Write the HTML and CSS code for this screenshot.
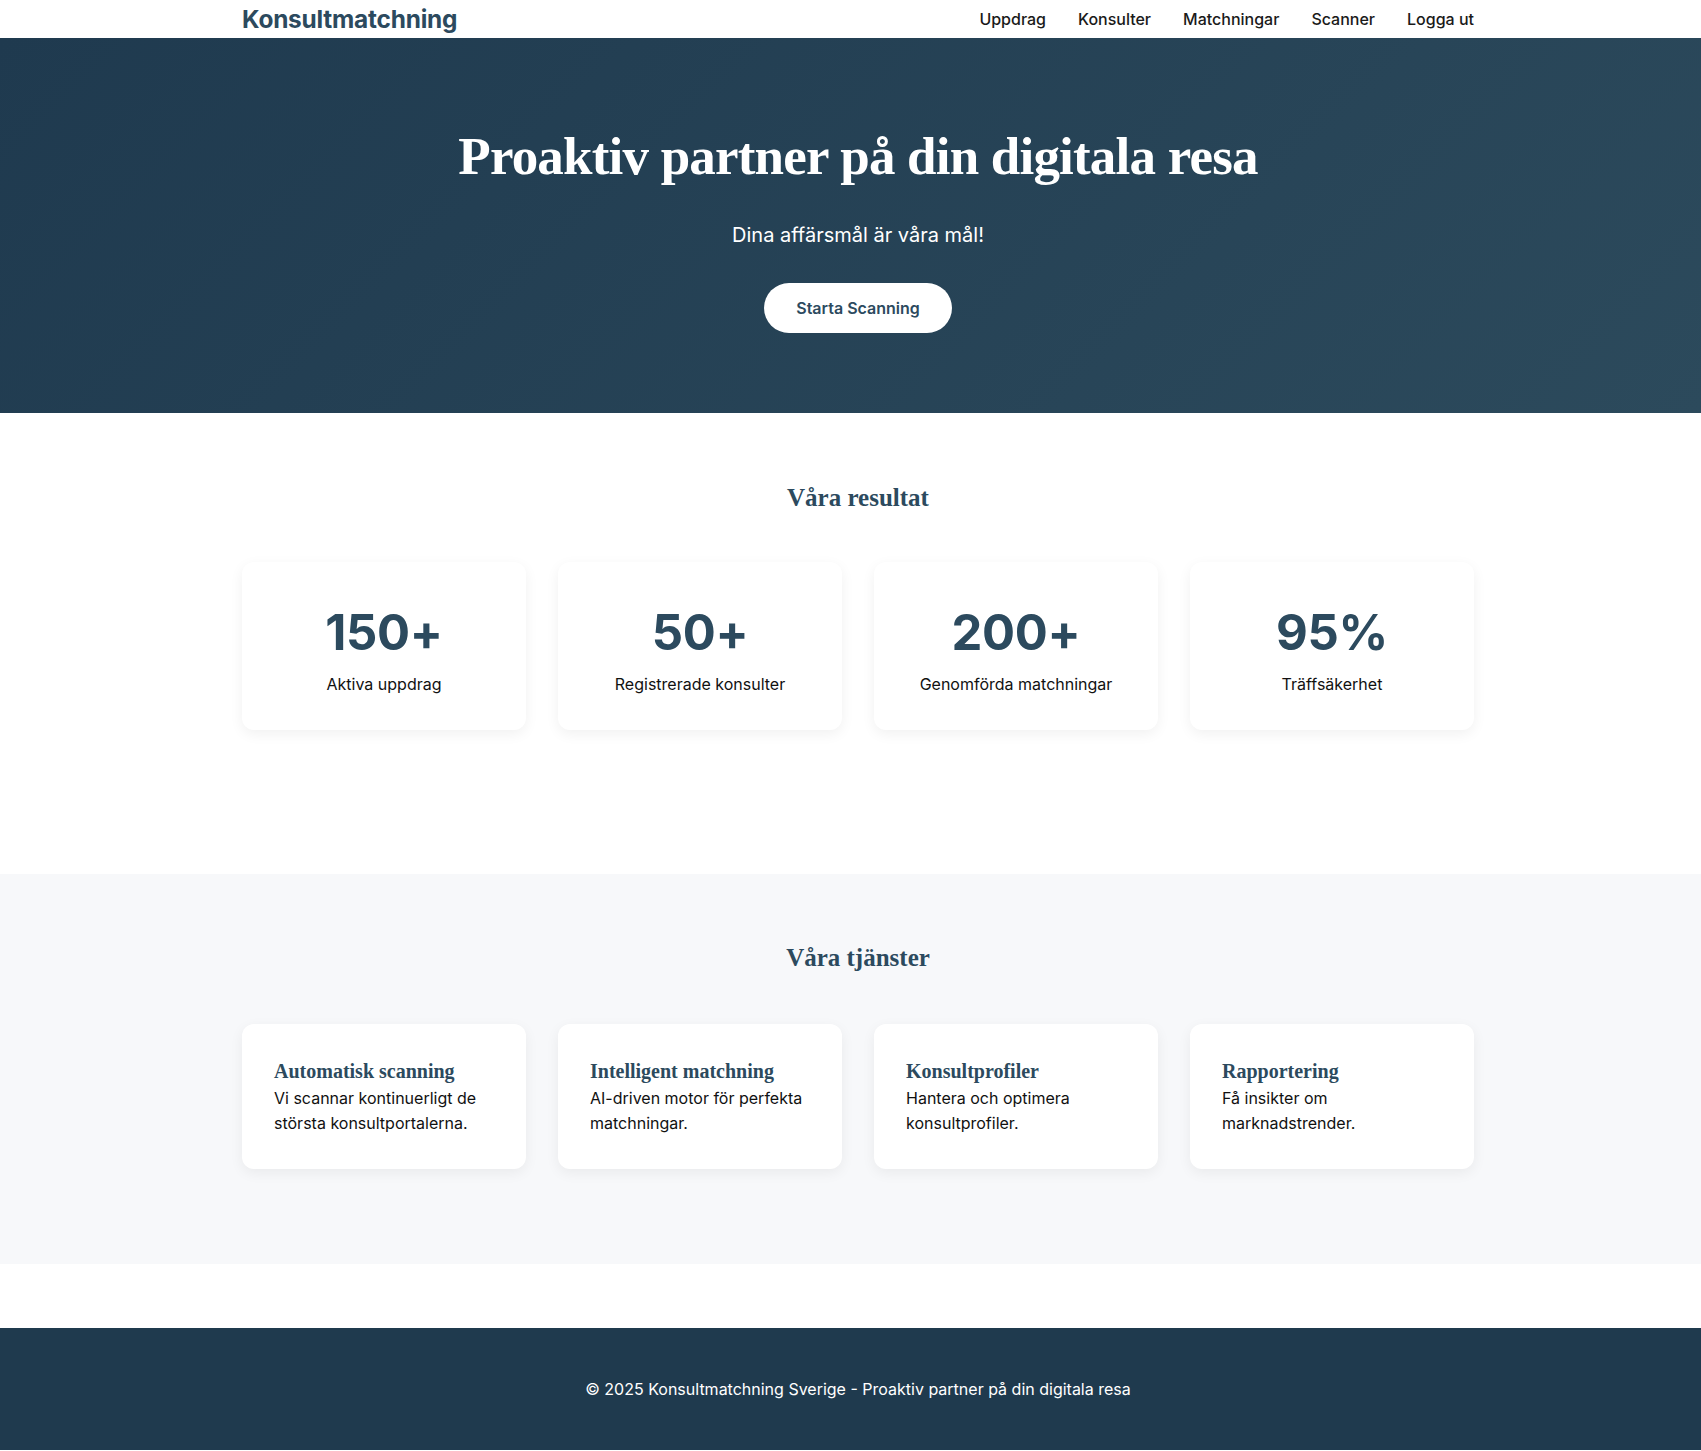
FILE: index.html
```html
<!DOCTYPE html>
<html lang="sv">
<head>
<meta charset="utf-8">
<title>Konsultmatchning</title>
<link rel="stylesheet" href="styles.css">
</head>
<body>
<header class="site-header">
  <div class="container nav-inner">
    <a class="logo" href="#">Konsultmatchning</a>
    <nav class="nav-links">
      <a href="#">Uppdrag</a>
      <a href="#">Konsulter</a>
      <a href="#">Matchningar</a>
      <a href="#">Scanner</a>
      <a href="#">Logga ut</a>
    </nav>
  </div>
</header>

<section class="hero">
  <div class="container hero-inner">
    <h1 class="hero-title">Proaktiv partner på din digitala resa</h1>
    <p class="hero-sub">Dina affärsmål är våra mål!</p>
    <a class="hero-btn" href="#">Starta Scanning</a>
  </div>
</section>

<section class="stats">
  <div class="container">
    <h2 class="section-title">Våra resultat</h2>
    <div class="card-grid stats-grid">
      <div class="card stat-card"><div class="stat-num">150+</div><div class="stat-label">Aktiva uppdrag</div></div>
      <div class="card stat-card"><div class="stat-num">50+</div><div class="stat-label">Registrerade konsulter</div></div>
      <div class="card stat-card"><div class="stat-num">200+</div><div class="stat-label">Genomförda matchningar</div></div>
      <div class="card stat-card"><div class="stat-num">95%</div><div class="stat-label">Träffsäkerhet</div></div>
    </div>
  </div>
</section>

<section class="services">
  <div class="container">
    <h2 class="section-title">Våra tjänster</h2>
    <div class="card-grid services-grid">
      <div class="card service-card"><h3>Automatisk scanning</h3><p>Vi scannar kontinuerligt de största konsultportalerna.</p></div>
      <div class="card service-card"><h3>Intelligent matchning</h3><p>AI-driven motor för perfekta matchningar.</p></div>
      <div class="card service-card"><h3>Konsultprofiler</h3><p>Hantera och optimera konsultprofiler.</p></div>
      <div class="card service-card"><h3>Rapportering</h3><p>Få insikter om marknadstrender.</p></div>
    </div>
  </div>
</section>

<footer class="site-footer">
  <div class="container">
    <p>© 2025 Konsultmatchning Sverige - Proaktiv partner på din digitala resa</p>
  </div>
</footer>
</body>
</html>
```

FILE: styles.css
```css
* { box-sizing: border-box; }

html, body {
  margin: 0;
  padding: 0;
}

body {
  font-family: Inter, "Noto Sans", "Liberation Sans", sans-serif;
  font-size: 16px;
  line-height: 1.5;
  color: #111;
  background: #fff;
}

a { text-decoration: none; color: inherit; }

.site-header,
.hero,
.stats,
.services,
.site-footer {
  padding-left: 15px;
}

.container {
  max-width: 1232px;
  margin-left: auto;
  margin-right: auto;
}

/* Header */
.site-header {
  background: #fff;
  height: 38px;
}

.nav-inner {
  height: 38px;
  display: flex;
  align-items: center;
  justify-content: space-between;
}

.logo {
  font-size: 24.4px;
  font-weight: 700;
  color: #2c4a5e;
  letter-spacing: -0.2px;
  line-height: 1;
}

.nav-links {
  display: flex;
  gap: 32px;
  font-size: 16px;
  font-weight: 500;
  color: #1a1a1a;
  margin-top: -1px;
}

/* Hero */
.hero {
  background: linear-gradient(135deg, #1f3a4f 0%, #2c4a5c 100%);
  color: #fff;
  padding-top: 85px;
  padding-bottom: 80px;
}

.hero-inner {
  display: flex;
  flex-direction: column;
  align-items: center;
  text-align: center;
}

.hero-title {
  margin: 0;
  font-family: "Liberation Serif", "DejaVu Serif", serif;
  font-weight: 700;
  font-size: 53px;
  line-height: 67px;
  letter-spacing: -0.8px;
}

.hero-sub {
  margin: 30px 0 33px;
  font-size: 20px;
  line-height: 1.5;
  font-weight: 400;
}

.hero-btn {
  display: inline-block;
  background: #fff;
  color: #2c4a5e;
  font-weight: 600;
  font-size: 16px;
  line-height: 24px;
  padding: 13px 32px;
  border-radius: 999px;
}

/* Sections */
.stats {
  padding-top: 65px;
  padding-bottom: 64px;
  background: #fff;
}

.services {
  padding-top: 64px;
  padding-bottom: 64px;
  background: #f7f8fa;
  margin-bottom: 64px;
}

.section-title {
  margin: 0 0 45px;
  text-align: center;
  font-family: "Liberation Serif", "DejaVu Serif", serif;
  font-weight: 700;
  font-size: 25px;
  line-height: 39px;
  color: #2c4a5e;
}

.services .section-title {
  margin-bottom: 47px;
}

.card-grid {
  display: grid;
  grid-template-columns: repeat(4, 1fr);
  gap: 32px;
}

.stats-grid { margin-bottom: 80px; }
.services-grid { margin-bottom: 31px; }

.card {
  background: #fff;
  border-radius: 12px;
  box-shadow: 0 4px 14px rgba(0, 0, 0, 0.06);
}

.stat-card {
  text-align: center;
  padding: 40px 24px 32px;
}

.stat-num {
  font-size: 49px;
  line-height: 62px;
  font-weight: 700;
  color: #2c4a5e;
  letter-spacing: -0.3px;
}

.stat-label {
  margin-top: 8px;
  font-size: 16px;
  line-height: 1.6;
  color: #111;
}

.service-card {
  padding: 32px;
}

.service-card h3 {
  margin: 0;
  font-family: "Liberation Serif", "DejaVu Serif", serif;
  font-weight: 700;
  font-size: 20px;
  line-height: 1.5;
  color: #2c4a5e;
}

.service-card p {
  margin: 0;
  font-size: 16px;
  line-height: 1.6;
  color: #111;
}

/* Footer */
.site-footer {
  background: #1f3a4e;
  color: #fff;
  text-align: center;
  padding-top: 49px;
  padding-bottom: 49px;
}

.site-footer p {
  margin: 0;
  font-size: 16px;
  line-height: 24px;
}
```
